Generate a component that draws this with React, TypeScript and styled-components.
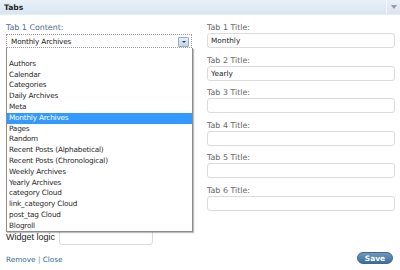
import React from "react";
import styled, { createGlobalStyle } from "styled-components";

const GlobalStyle = createGlobalStyle`
  html, body {
    margin: 0;
    padding: 0;
    background: #fff;
  }
  body {
    width: 400px;
    height: 270px;
    overflow: hidden;
    font-family: "DejaVu Sans", Verdana, sans-serif;
  }
`;

const Widget = styled.div`
  width: 400px;
  height: 270px;
  display: flex;
  flex-direction: column;
  background: #fff;
`;

const Header = styled.div`
  height: 14px;
  display: flex;
  align-items: stretch;
  background: linear-gradient(#e9f0f8, #d9e5f2);
  border-bottom: 1px solid #e6edf5;
`;

const Title = styled.div`
  flex: 1;
  display: flex;
  align-items: center;
  padding-left: 4px;
  font-size: 7.6px;
  font-weight: bold;
  color: #2b2b2b;
`;

const Toggle = styled.div`
  width: 13px;
  border-left: 1px solid #f4f7fb;
  display: flex;
  align-items: center;
  justify-content: center;

  &::after {
    content: "";
    border-left: 3px solid transparent;
    border-right: 3px solid transparent;
    border-top: 4px solid #9a9a9a;
  }
`;

const Body = styled.div`
  padding: 7px 5px 0 6px;
`;

const Columns = styled.div`
  display: grid;
  grid-template-columns: 186px 188px;
  column-gap: 15px;
`;

const Column = styled.div`
  display: flex;
  flex-direction: column;
`;

const Label = styled.div<{ $blue?: boolean }>`
  height: 11px;
  line-height: 11px;
  font-size: 7.9px;
  color: ${(p) => (p.$blue ? "#4f6f8f" : "#666")};
`;

const SelectWrap = styled.div`
  position: relative;
  margin-top: 1px;
`;

const SelectBox = styled.div`
  box-sizing: border-box;
  height: 14px;
  display: flex;
  align-items: center;
  padding: 0 2px 0 4px;
  border: 1px dotted #9a9a9a;
  font-size: 7.3px;
  letter-spacing: -0.15px;
  color: #222;
`;

const SelectText = styled.span`
  flex: 1;
`;

const ArrowButton = styled.span`
  box-sizing: border-box;
  width: 11px;
  height: 10px;
  margin-top: 1px;
  border: 1px solid #98aec8;
  border-radius: 1px;
  background: linear-gradient(#e4edf8, #c3d5ec);
  display: flex;
  align-items: center;
  justify-content: center;

  &::after {
    content: "";
    border-left: 2px solid transparent;
    border-right: 2px solid transparent;
    border-top: 2px solid #2a3a50;
  }
`;

const DropList = styled.ul`
  position: absolute;
  top: 100%;
  left: 0;
  z-index: 2;
  box-sizing: border-box;
  width: 187px;
  height: 184px;
  margin: 0;
  padding: 0;
  list-style: none;
  background: #fff;
  border: 1px solid #8c8c8c;
  border-top: none;
  box-shadow: 1px 1px 1px rgba(0, 0, 0, 0.25);
`;

const Option = styled.li<{ $selected?: boolean }>`
  height: 10.8px;
  line-height: 10.8px;
  padding-left: 2px;
  font-size: 7.3px;
  letter-spacing: -0.2px;
  white-space: nowrap;
  color: ${(p) => (p.$selected ? "#fff" : "#2a2a2a")};
  background: ${(p) => (p.$selected ? "#3399ff" : "transparent")};
`;

const Field = styled.div`
  display: flex;
  flex-direction: column;
  margin-bottom: 6.6px;
`;

const TextInput = styled.div`
  box-sizing: border-box;
  height: 15px;
  display: flex;
  align-items: center;
  padding-left: 3px;
  border: 1px solid #dcdcdc;
  border-radius: 3px;
  font-size: 7.3px;
  color: #222;
  background: #fff;
`;

const LogicRow = styled.div`
  display: flex;
  align-items: center;
  gap: 4px;
  margin-top: 12px;
`;

const LogicLabel = styled.span`
  font-family: "Liberation Sans", Arial, sans-serif;
  font-size: 9px;
  color: #222;
`;

const LogicInput = styled.div`
  box-sizing: border-box;
  width: 94px;
  height: 15px;
  border: 1px solid #dcdcdc;
  border-radius: 3px;
`;

const Footer = styled.div`
  margin-top: auto;
  padding: 0 7px 6px 6px;
  display: flex;
  align-items: center;
  justify-content: space-between;
`;

const Links = styled.div`
  font-size: 7.3px;
  color: #2f6aa0;
  padding-top: 3px;
`;

const Sep = styled.span`
  color: #888;
`;

const SaveButton = styled.div`
  box-sizing: border-box;
  width: 36px;
  height: 12px;
  border-radius: 6px;
  border: 1px solid #3d6890;
  background: linear-gradient(#6e97bf, #3f6d98);
  color: #fff;
  font-size: 7.5px;
  font-weight: bold;
  display: flex;
  align-items: center;
  justify-content: center;
`;

const options = [
  "",
  "Authors",
  "Calendar",
  "Categories",
  "Daily Archives",
  "Meta",
  "Monthly Archives",
  "Pages",
  "Random",
  "Recent Posts (Alphabetical)",
  "Recent Posts (Chronological)",
  "Weekly Archives",
  "Yearly Archives",
  "category Cloud",
  "link_category Cloud",
  "post_tag Cloud",
  "Blogroll"
];

const titles = ["Monthly", "Yearly", "", "", "", ""];

export default function App() {
  return (
    <Widget>
      <GlobalStyle />
      <Header>
        <Title>Tabs</Title>
        <Toggle />
      </Header>
      <Body>
        <Columns>
          <Column>
            <Label $blue>Tab 1 Content:</Label>
            <SelectWrap>
              <SelectBox>
                <SelectText>Monthly Archives</SelectText>
                <ArrowButton />
              </SelectBox>
              <DropList>
                {options.map((o, i) => (
                  <Option key={i} $selected={o === "Monthly Archives"}>
                    {o || "\u00a0"}
                  </Option>
                ))}
              </DropList>
            </SelectWrap>
          </Column>
          <Column>
            {titles.map((t, i) => (
              <Field key={i}>
                <Label>Tab {i + 1} Title:</Label>
                <TextInput>{t}</TextInput>
              </Field>
            ))}
          </Column>
        </Columns>
        <LogicRow>
          <LogicLabel>Widget logic</LogicLabel>
          <LogicInput />
        </LogicRow>
      </Body>
      <Footer>
        <Links>
          Remove <Sep>|</Sep> Close
        </Links>
        <SaveButton>Save</SaveButton>
      </Footer>
    </Widget>
  );
}
